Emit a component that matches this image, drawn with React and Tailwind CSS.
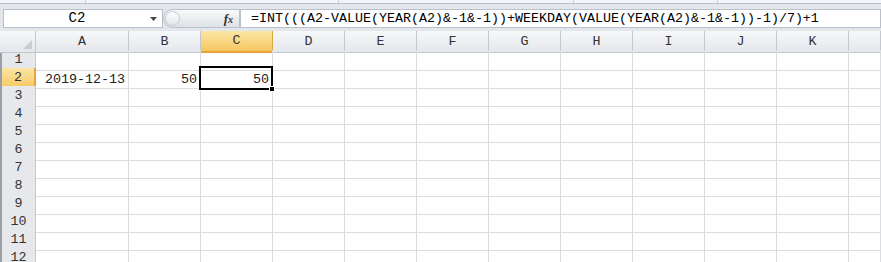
import React from "react";

const COLS = ["A", "B", "C", "D", "E", "F", "G", "H", "I", "J", "K", ""];
const ROWS = [1, 2, 3, 4, 5, 6, 7, 8, 9, 10, 11, 12];
const FORMULA = "=INT(((A2-VALUE(YEAR(A2)&-1&-1))+WEEKDAY(VALUE(YEAR(A2)&-1&-1))-1)/7)+1";

const gridCols = "grid grid-cols-[36px_93px_repeat(10,72px)_1fr]";
const mono = "font-['Liberation_Mono','Noto_Sans_CJK_SC',monospace] text-[13.33px]";

const cellValue = (row, col) => {
  if (row !== 2) return "";
  if (col === "A") return "2019-12-13";
  if (col === "B" || col === "C") return "50";
  return "";
};

const ColumnHeader = () => (
  <div className={`${gridCols} h-[19px]`}>
    <div className="relative border-r border-b border-[#c4c8ce] bg-gradient-to-b from-[#f7f8f9] to-[#e4e7eb]">
      <svg className="absolute right-[3px] bottom-[3px]" width="9" height="9" viewBox="0 0 9 9">
        <polygon points="9,0 9,9 0,9" fill="#c9ccd1" />
      </svg>
    </div>
    {COLS.map((c, i) =>
      c === "C" ? (
        <div
          key={i}
          className="flex items-center justify-center border-r border-b-2 border-r-[#d8a93e] border-b-[#e8a33c] bg-gradient-to-b from-[#fbe6a4] to-[#f5c85f] text-[#333]"
        >
          {c}
        </div>
      ) : (
        <div
          key={i}
          className="flex items-center justify-center border-r border-b border-[#c4c8ce] bg-gradient-to-b from-[#f7f8f9] to-[#e4e7eb] text-[#333]"
        >
          {c}
        </div>
      )
    )}
  </div>
);

const Row = ({ n }) => (
  <div className={`${gridCols} h-[18px]`}>
    {n === 2 ? (
      <div className="flex items-center justify-center border-l-2 border-l-[#9aa0a8] border-r-2 border-r-[#e8a33c] border-b border-b-[#d8a93e] bg-gradient-to-b from-[#fbe6a4] to-[#f5c85f] text-[#333]">
        {n}
      </div>
    ) : (
      <div className="flex items-center justify-center border-l-2 border-r border-b border-[#c4c8ce] border-l-[#9aa0a8] bg-[#e6e8eb] text-[#333]">
        {n}
      </div>
    )}
    {COLS.map((c, i) => {
      const v = cellValue(n, c);
      const selected = n === 2 && c === "C";
      return (
        <div
          key={i}
          className="relative flex items-end justify-end border-r border-b border-[#dadcdd] pr-[3px] pb-[1px] leading-[15px] text-[#222]"
        >
          {v}
          {selected && (
            <div className="absolute -left-[2px] -top-[2px] -right-[1px] -bottom-[2px] z-10 border-2 border-black">
              <div className="absolute -right-[4px] -bottom-[4px] h-[6px] w-[6px] border border-white bg-black" />
            </div>
          )}
        </div>
      );
    })}
  </div>
);

export default function App() {
  return (
    <div className={`h-[262px] w-[881px] overflow-hidden bg-white ${mono}`}>
      {/* ribbon remnant */}
      <div className="relative h-[4px] border-b border-[#b9c0c9] bg-[#f3f4f6]">
        <div className="absolute left-[85px] top-0 h-[3px] w-px bg-[#c9ced4]" />
        <div className="absolute left-[338px] top-0 h-[3px] w-px bg-[#c9ced4]" />
        <div className="absolute left-[573px] top-0 h-[3px] w-px bg-[#c9ced4]" />
        <div className="absolute left-[717px] top-0 h-[3px] w-px bg-[#c9ced4]" />
      </div>

      {/* formula bar */}
      <div className="flex h-[27px] items-start bg-[#e3e7ec] pt-[5px]">
        <div className="ml-[3px] flex h-[19px] w-[160px] items-center border border-[#b9c0c9] bg-white">
          <span className="flex-1 text-center text-[14px] text-black">C2</span>
          <svg className="mr-[5px]" width="7" height="4" viewBox="0 0 7 4">
            <polygon points="0,0 7,0 3.5,4" fill="#444" />
          </svg>
        </div>
        <div className="flex h-[19px] w-[77px] items-center rounded-l-full border border-[#b9c0c9] bg-gradient-to-b from-[#f8f9fa] to-[#dfe2e6]">
          <div className="ml-[1px] h-[15px] w-[15px] rounded-full border border-[#c3c7cc] bg-gradient-to-b from-[#ffffff] to-[#e2e5e8]" />
          <span className="ml-auto mr-[6px] font-['Liberation_Serif',serif] text-[13px] font-bold italic text-[#333]">
            f<span className="text-[10px]">x</span>
          </span>
        </div>
        <div className="flex h-[19px] flex-1 items-center border border-[#b9c0c9] bg-white pl-[10px] text-[13.33px] text-black">
          {FORMULA}
        </div>
      </div>

      <ColumnHeader />
      {ROWS.map((n) => (
        <Row key={n} n={n} />
      ))}
    </div>
  );
}
